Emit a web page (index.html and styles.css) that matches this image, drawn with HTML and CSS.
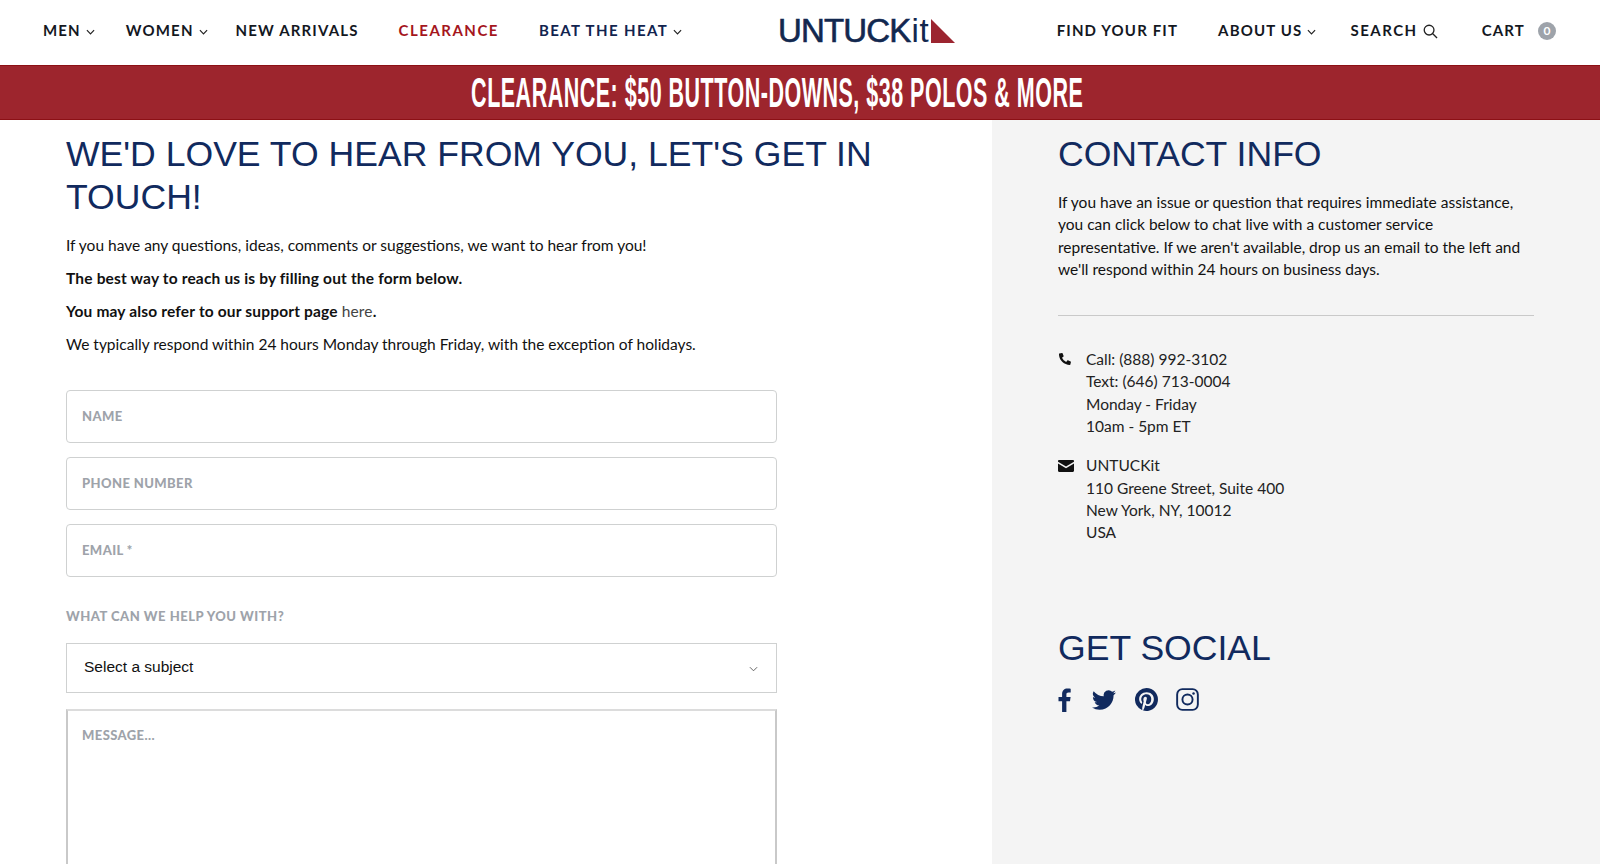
FILE: index.html
```html
<!DOCTYPE html>
<html>

<head>
    <title>Contact Us - UNTUCKit</title>
    <link rel="stylesheet" href="styles.css">
</head>

<body>
    <header class="header">
        <nav class="nav nav-left">
            <a class="nav-link nav-men" href="#">MEN <svg class="chevron" viewBox="0 0 10 6"><path d="M1 1l4 4 4-4"/></svg></a>
            <a class="nav-link nav-women" href="#">WOMEN <svg class="chevron" viewBox="0 0 10 6"><path d="M1 1l4 4 4-4"/></svg></a>
            <a class="nav-link" href="#">NEW ARRIVALS</a>
            <a class="nav-link nav-red" href="#">CLEARANCE</a>
            <a class="nav-link nav-navy" href="#">BEAT THE HEAT <svg class="chevron" viewBox="0 0 10 6"><path d="M1 1l4 4 4-4"/></svg></a>
        </nav>
        <a class="logo" href="#">
            <span class="logo-text">UNTUCK<span class="logo-it">it</span></span>
            <svg class="logo-mark" viewBox="0 0 24 24"><path d="M0 0L24 24H0Z"/></svg>
        </a>
        <nav class="nav nav-right">
            <a class="nav-link" href="#">FIND YOUR FIT</a>
            <a class="nav-link nav-about" href="#">ABOUT US <svg class="chevron" viewBox="0 0 10 6"><path d="M1 1l4 4 4-4"/></svg></a>
            <a class="nav-link nav-search" href="#">SEARCH <svg class="search-icon" viewBox="0 0 16 16"><circle cx="6.5" cy="6.5" r="5.2"/><path d="M10.4 10.4L15 15"/></svg></a>
            <a class="nav-link nav-cart" href="#">CART <span class="cart-count">0</span></a>
        </nav>
    </header>

    <div class="banner"><span class="banner-text">CLEARANCE: $50 BUTTON-DOWNS, $38 POLOS &amp; MORE</span></div>

    <main class="page">
        <section class="main-col">
            <h1 class="title">WE'D LOVE TO HEAR FROM YOU, LET'S GET IN TOUCH!</h1>
            <p>If you have any questions, ideas, comments or suggestions, we want to hear from you!</p>
            <p><strong>The best way to reach us is by filling out the form below.</strong></p>
            <p><strong>You may also refer to our support page <a class="plain-link" href="#">here</a>.</strong></p>
            <p>We typically respond within 24 hours Monday through Friday, with the exception of holidays.</p>

            <form class="contact-form">
                <input class="field" type="text" placeholder="NAME">
                <input class="field" type="text" placeholder="PHONE NUMBER">
                <input class="field" type="text" placeholder="EMAIL *">
                <label class="form-label">WHAT CAN WE HELP YOU WITH?</label>
                <div class="select-box">
                    <span>Select a subject</span>
                    <svg class="chevron select-chevron" viewBox="0 0 10 6"><path d="M1 1l4 4 4-4"/></svg>
                </div>
                <textarea class="message" placeholder="MESSAGE..."></textarea>
            </form>
        </section>

        <aside class="side-col">
            <h2 class="title">CONTACT INFO</h2>
            <p class="side-text">If you have an issue or question that requires immediate assistance, you can click below to chat live with a customer service representative. If we aren't available, drop us an email to the left and we'll respond within 24 hours on business days.</p>
            <hr class="divider">
            <div class="info-row">
                <svg class="info-icon" viewBox="0 0 512 512"><path d="M493 24l-104-24c-11-3-23 3-27 14l-48 112c-4 10-1 21 7 28l61 50c-36 76-98 139-175 175l-50-61c-7-8-18-11-28-7L17 359c-11 5-17 17-14 28l24 104c3 11 12 18 23 18 256 0 464-207 464-464 0-11-8-20-21-21z" transform="matrix(-1 0 0 1 512 0)"/></svg>
                <div>Call: (888) 992-3102<br>Text: (646) 713-0004<br>Monday - Friday<br>10am - 5pm ET</div>
            </div>
            <div class="info-row">
                <svg class="info-icon info-mail" viewBox="0 0 16 12"><path d="M1.2 0h13.6C15.5 0 16 .5 16 1.2v.5L8 6.6 0 1.700v-.5C0 .5.5 0 1.200 0z"/><path d="M0 3.400l8 4.900 8-4.900v7.400c0 .7-.5 1.200-1.200 1.200H1.200C.5 12 0 11.500 0 10.800z"/></svg>
                <div>UNTUCKit<br>110 Greene Street, Suite 400<br>New York, NY, 10012<br>USA</div>
            </div>
            <h2 class="title social-title">GET SOCIAL</h2>
            <div class="social">
                <svg class="social-fb" viewBox="0 0 13 24"><path d="M8.400 24V13.300h3.600l.6-4.200H8.400V6.500c0-1.200.4-2 2.100-2h2.200V.7C12.300.6 11 .5 9.500.5 6.300.5 4.100 2.500 4.100 6v3.100H.5v4.200h3.600V24z"/></svg>
                <svg class="social-tw" viewBox="0 0 24 24"><path d="M23.950 4.570a10 10 0 0 1-2.820.77 4.960 4.960 0 0 0 2.160-2.720 9.900 9.900 0 0 1-3.120 1.180 4.920 4.920 0 0 0-8.380 4.480A13.970 13.970 0 0 1 1.670 3.150a4.920 4.920 0 0 0 1.520 6.570 4.900 4.900 0 0 1-2.230-.62v.06a4.920 4.920 0 0 0 3.950 4.830 5 5 0 0 1-2.210.08 4.940 4.940 0 0 0 4.600 3.420A9.870 9.870 0 0 1 0 19.540a14 14 0 0 0 7.560 2.210c9.050 0 14-7.500 14-13.980 0-.21 0-.42-.02-.63a9.940 9.940 0 0 0 2.410-2.570z"/></svg>
                <svg class="social-pin" viewBox="0 0 24 24"><path fill-rule="evenodd" d="M12 0a12 12 0 0 0-4.370 23.180c-.1-.95-.2-2.400.04-3.440l1.400-5.960s-.35-.72-.35-1.780c0-1.670.97-2.910 2.170-2.910 1.020 0 1.520.77 1.520 1.690 0 1.030-.65 2.560-.99 3.990-.28 1.190.6 2.160 1.780 2.160 2.130 0 3.770-2.250 3.770-5.500 0-2.870-2.070-4.880-5.020-4.880-3.420 0-5.430 2.570-5.430 5.220 0 1.030.4 2.140.9 2.740.1.120.11.220.08.340l-.33 1.360c-.05.220-.18.270-.41.160-1.500-.7-2.430-2.890-2.430-4.650 0-3.780 2.750-7.260 7.930-7.260 4.160 0 7.400 2.970 7.400 6.930 0 4.140-2.610 7.470-6.230 7.470-1.220 0-2.360-.63-2.750-1.380l-.75 2.850c-.27 1.040-1 2.350-1.490 3.140A12 12 0 1 0 12 0z"/></svg>
                <svg class="social-ig" viewBox="0 0 24 24"><rect x="1.200" y="1.200" width="21.600" height="21.600" rx="5.500"/><circle cx="12" cy="12" r="5.300"/><circle class="ig-dot" cx="18.300" cy="5.700" r="1.300"/></svg>
            </div>
        </aside>
    </main>
</body>

</html>
```

FILE: styles.css
```css
* {
    box-sizing: border-box;
}

html,
body {
    height: 864px;
    overflow: hidden;
}

body {
    margin: 0;
    font-family: Lato, Arial, sans-serif;
    font-size: 15.500px;
    color: #111;
    background-color: #fff;
}

a {
    text-decoration: none;
    color: inherit;
}

strong {
    letter-spacing: 0.170px;
}

/* header */
.header {
    display: flex;
    align-items: center;
    justify-content: space-between;
    height: 65px;
    padding: 0 44px 0 43px;
    background-color: #fff;
}

.nav {
    display: flex;
    align-items: center;
    gap: 40px;
    padding-bottom: 5px;
}

.nav-left {
    width: 652px;
}

.nav-right {
    width: 514px;
    justify-content: flex-end;
}

.nav-link {
    display: flex;
    align-items: center;
    gap: 5px;
    font-size: 15px;
    font-weight: 700;
    letter-spacing: 1.150px;
    white-space: nowrap;
    color: #14181f;
}

.nav-men {
    margin-right: -9px;
}

.nav-women {
    margin-right: -12px;
}

.nav-red {
    letter-spacing: 1.500px;
    color: #a5161d;
}

.nav-navy {
    letter-spacing: 1.400px;
    color: #12244f;
}

.nav-about {
    margin-right: -6px;
}

.nav-search {
    letter-spacing: 1.500px;
}

.nav-cart {
    margin-left: 4px;
    gap: 13px;
}

.chevron {
    width: 9px;
    height: 6px;
    margin-top: 3px;
    fill: none;
    stroke: #222;
    stroke-width: 1.300;
}

.search-icon {
    width: 15px;
    height: 15px;
    margin-top: 2px;
    fill: none;
    stroke: #222;
    stroke-width: 1.400;
}

.cart-count {
    display: flex;
    align-items: center;
    justify-content: center;
    width: 18px;
    height: 18px;
    margin-top: 1px;
    border-radius: 50%;
    font-size: 12px;
    letter-spacing: 0;
    color: #fff;
    background-color: #9ea3aa;
}

.logo {
    display: flex;
    align-items: flex-end;
    height: 30px;
    margin-bottom: 4px;
    margin-left: -4px;
}

.logo-text {
    font-family: "Liberation Sans", Arial, sans-serif;
    font-size: 33px;
    line-height: 30px;
    letter-spacing: -0.800px;
    color: #12284f;
    -webkit-text-stroke: 0.600px #12284f;
}

.logo-it {
    margin-left: 1px;
    letter-spacing: 0.500px;
    -webkit-text-stroke: 0;
}

.logo-mark {
    width: 24px;
    height: 24px;
    margin-left: 2px;
    margin-bottom: 3px;
    fill: #9c2530;
}

/* banner */
.banner {
    display: flex;
    align-items: center;
    justify-content: center;
    height: 55px;
    padding-right: 46px;
    overflow: hidden;
    background-color: #9d252d;
    border-top: 1px solid #8c1015;
    border-bottom: 1px solid #8c1015;
}

.banner-text {
    display: inline-block;
    flex: none;
    transform: scaleX(0.5);
    font-family: "Liberation Sans", Arial, sans-serif;
    font-size: 43px;
    font-weight: 700;
    letter-spacing: 1px;
    white-space: nowrap;
    color: #fff;
}

/* page columns */
.page {
    display: flex;
    height: 744px;
    overflow: hidden;
}

.main-col {
    width: 992px;
    padding: 13px 66px 0;
}

.side-col {
    flex: 1;
    padding: 13px 66px 0;
    background-color: #f4f4f4;
}

.title {
    margin: 0;
    font-family: "Liberation Sans", Arial, sans-serif;
    font-size: 35.600px;
    font-weight: 400;
    line-height: 43px;
    color: #112a5e;
}

.main-col p {
    margin: 0 0 15px;
    line-height: 18px;
}

.main-col .title {
    margin-bottom: 17px;
}

.plain-link {
    font-weight: 400;
    color: #444;
}

/* form */
.contact-form {
    display: flex;
    flex-direction: column;
    width: 711px;
    margin-top: 37px;
}

.field {
    height: 53px;
    margin-bottom: 14px;
    padding: 0 15px 1px;
    border: 1px solid #cfd1d1;
    border-radius: 4px;
    background-color: #fff;
    font-family: Lato, Arial, sans-serif;
    font-size: 13px;
    outline: none;
}

.field::placeholder,
.message::placeholder {
    font-weight: 900;
    letter-spacing: 0.400px;
    color: #9ea3aa;
    opacity: 1;
}

.form-label {
    margin-top: 17px;
    margin-bottom: 19px;
    font-size: 13px;
    font-weight: 900;
    letter-spacing: 0.500px;
    line-height: 16px;
    color: #9ea3aa;
}

.select-box {
    display: flex;
    align-items: center;
    justify-content: space-between;
    height: 50px;
    margin-bottom: 16px;
    padding: 0 18px 2px 17px;
    border: 1px solid #cfd1d1;
    font-family: "Liberation Sans", Arial, sans-serif;
    font-size: 15.500px;
    color: #111;
}

.select-chevron {
    stroke: #555;
    stroke-width: 1;
}

.message {
    height: 240px;
    padding: 16px 14px;
    border: 2px solid #dcdcdc;
    border-right-color: #c9c9c9;
    border-left-color: #c9c9c9;
    font-family: Lato, Arial, sans-serif;
    font-size: 13px;
    resize: none;
    outline: none;
}

/* contact info */
.side-text {
    margin: 15px 0 35px;
    line-height: 22.300px;
}

.divider {
    margin: 0 0 32px;
    border: none;
    border-top: 1px solid #c9c9c9;
}

.info-row {
    display: flex;
    margin-bottom: 17px;
    line-height: 22.300px;
    color: #222;
}

.info-icon {
    flex: none;
    width: 12px;
    height: 12px;
    margin: 5px 15px 0 1px;
    fill: #111;
}

.info-mail {
    width: 16px;
    height: 12px;
    margin: 6px 12px 0 0;
}

.social-title {
    margin-top: 83px;
    margin-bottom: 18px;
}

.social {
    display: flex;
    align-items: center;
    gap: 19px;
}

.social svg {
    fill: #112a5e;
}

.social-fb {
    width: 13px;
    height: 24px;
    margin-right: 2px;
}

.social-tw {
    width: 24px;
    height: 24px;
}

.social-pin {
    width: 23px;
    height: 23px;
    margin-right: -1px;
}

.social .social-ig {
    width: 23px;
    height: 23px;
    fill: none;
    stroke: #112a5e;
    stroke-width: 2;
}

.social .ig-dot {
    fill: #112a5e;
    stroke: none;
}
```
